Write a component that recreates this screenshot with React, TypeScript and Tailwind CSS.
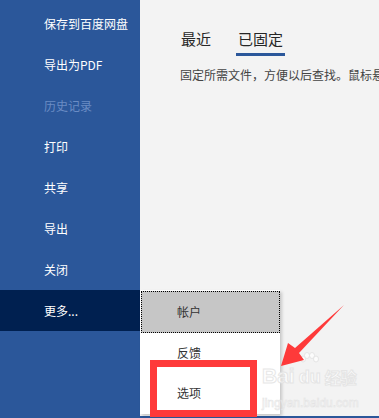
import React from "react";

const items = [
  { t: "保存到百度网盘" },
  { t: "导出为PDF" },
  { t: "历史记录", disabled: true },
  { t: "打印" },
  { t: "共享" },
  { t: "导出" },
  { t: "关闭" },
  { t: "更多...", active: true },
];

export default function App() {
  const font = { fontFamily: '"Microsoft YaHei", "Noto Sans CJK SC", "Noto Sans", sans-serif' };
  return (
    <div className="relative w-[379px] h-[418px] overflow-hidden flex" style={font}>
      <div className="w-[140px] h-full bg-[#2b579a] pt-[3px] flex flex-col">
        {items.map((it) => (
          <div
            key={it.t}
            className={
              "h-[41px] flex items-center pl-[44px] text-[12px] " +
              (it.active ? "bg-[#002050] text-white" : it.disabled ? "text-[#6a8cc4]" : "text-white")
            }
          >
            {it.t}
          </div>
        ))}
      </div>
      <div className="flex-1 h-full bg-[#f3f3f3] pt-[29px] pl-[41px] overflow-hidden">
        <div className="flex gap-[25px] text-[15px] leading-[20px] text-[#262626]">
          <div className="flex flex-col">
            <span>最近</span>
          </div>
          <div className="flex flex-col">
            <span className="px-[2px]">已固定</span>
            <div className="mt-[4px] h-[3px] bg-[#2b579a]" />
          </div>
        </div>
        <div className="mt-[11px] text-[12px] leading-[16px] text-[#444] whitespace-nowrap -ml-[1px]">
          固定所需文件，方便以后查找。鼠标悬停在某个文件上时，单击图钉图标。
        </div>
      </div>

      {/* bottom blue strip */}
      <div className="absolute left-[140px] right-0 bottom-0 h-[2px] bg-[#2b579a]" />

      {/* popup menu */}
      <div className="absolute left-[140px] top-[290px] w-[140px] h-[124px] bg-white shadow-[2px_2px_3px_rgba(0,0,0,0.18)] flex flex-col text-[12px] text-[#333]">
        <div className="h-[42px] ml-[1px] mt-[1px] bg-[#c6c6c6] border border-dotted border-black flex items-center pl-[35px]">
          帐户
        </div>
        <div className="h-[40px] flex items-center pl-[37px]">反馈</div>
        <div className="h-[40px] flex items-center pl-[37px]">选项</div>
      </div>

      {/* watermark */}
      <div className="absolute left-[262px] top-[364px] pointer-events-none select-none opacity-80">
        <svg className="absolute left-[36px] -top-[12px]" width="22" height="16" viewBox="0 0 22 16">
          <g fill="#fff" stroke="#e2e2e2" strokeWidth="1">
            <ellipse cx="5" cy="7" rx="2.5" ry="3" />
            <ellipse cx="9" cy="3.5" rx="2.5" ry="3" />
            <ellipse cx="14" cy="3.5" rx="2.5" ry="3" />
            <ellipse cx="18" cy="7" rx="2.5" ry="3" />
          </g>
        </svg>
        <div className="flex items-end gap-[4px]">
          <span
            className="text-[21px] font-bold leading-[24px] text-white"
            style={{ fontFamily: "Arial, 'Liberation Sans', sans-serif", WebkitTextStroke: "1px #e2e2e2" }}
          >
            Bai
          </span>
          <span
            className="text-[18px] font-bold leading-[22px] text-white"
            style={{ fontFamily: "Arial, 'Liberation Sans', sans-serif", WebkitTextStroke: "1px #e2e2e2" }}
          >
            du
          </span>
          <span className="text-[16px] font-bold leading-[22px] text-white" style={{ WebkitTextStroke: "1px #e2e2e2" }}>
            经验
          </span>
        </div>
        <div
          className="text-[12px] leading-[14px] text-white mt-[8px]"
          style={{ fontFamily: "Arial, 'Liberation Sans', sans-serif", WebkitTextStroke: "0.6px #e0e0e0" }}
        >
          jingyan.baidu.com
        </div>
      </div>

      {/* red box */}
      <div className="absolute left-[150px] top-[360px] w-[107px] h-[57px] border-[7px] border-[#fe3a3a]" />

      {/* red arrow */}
      <svg className="absolute left-0 top-0 pointer-events-none" width="379" height="418" viewBox="0 0 379 418">
        <polygon points="344,305 299,353 304,360 281,366 288,343 295,348" fill="#fe3a3a" />
      </svg>
    </div>
  );
}
